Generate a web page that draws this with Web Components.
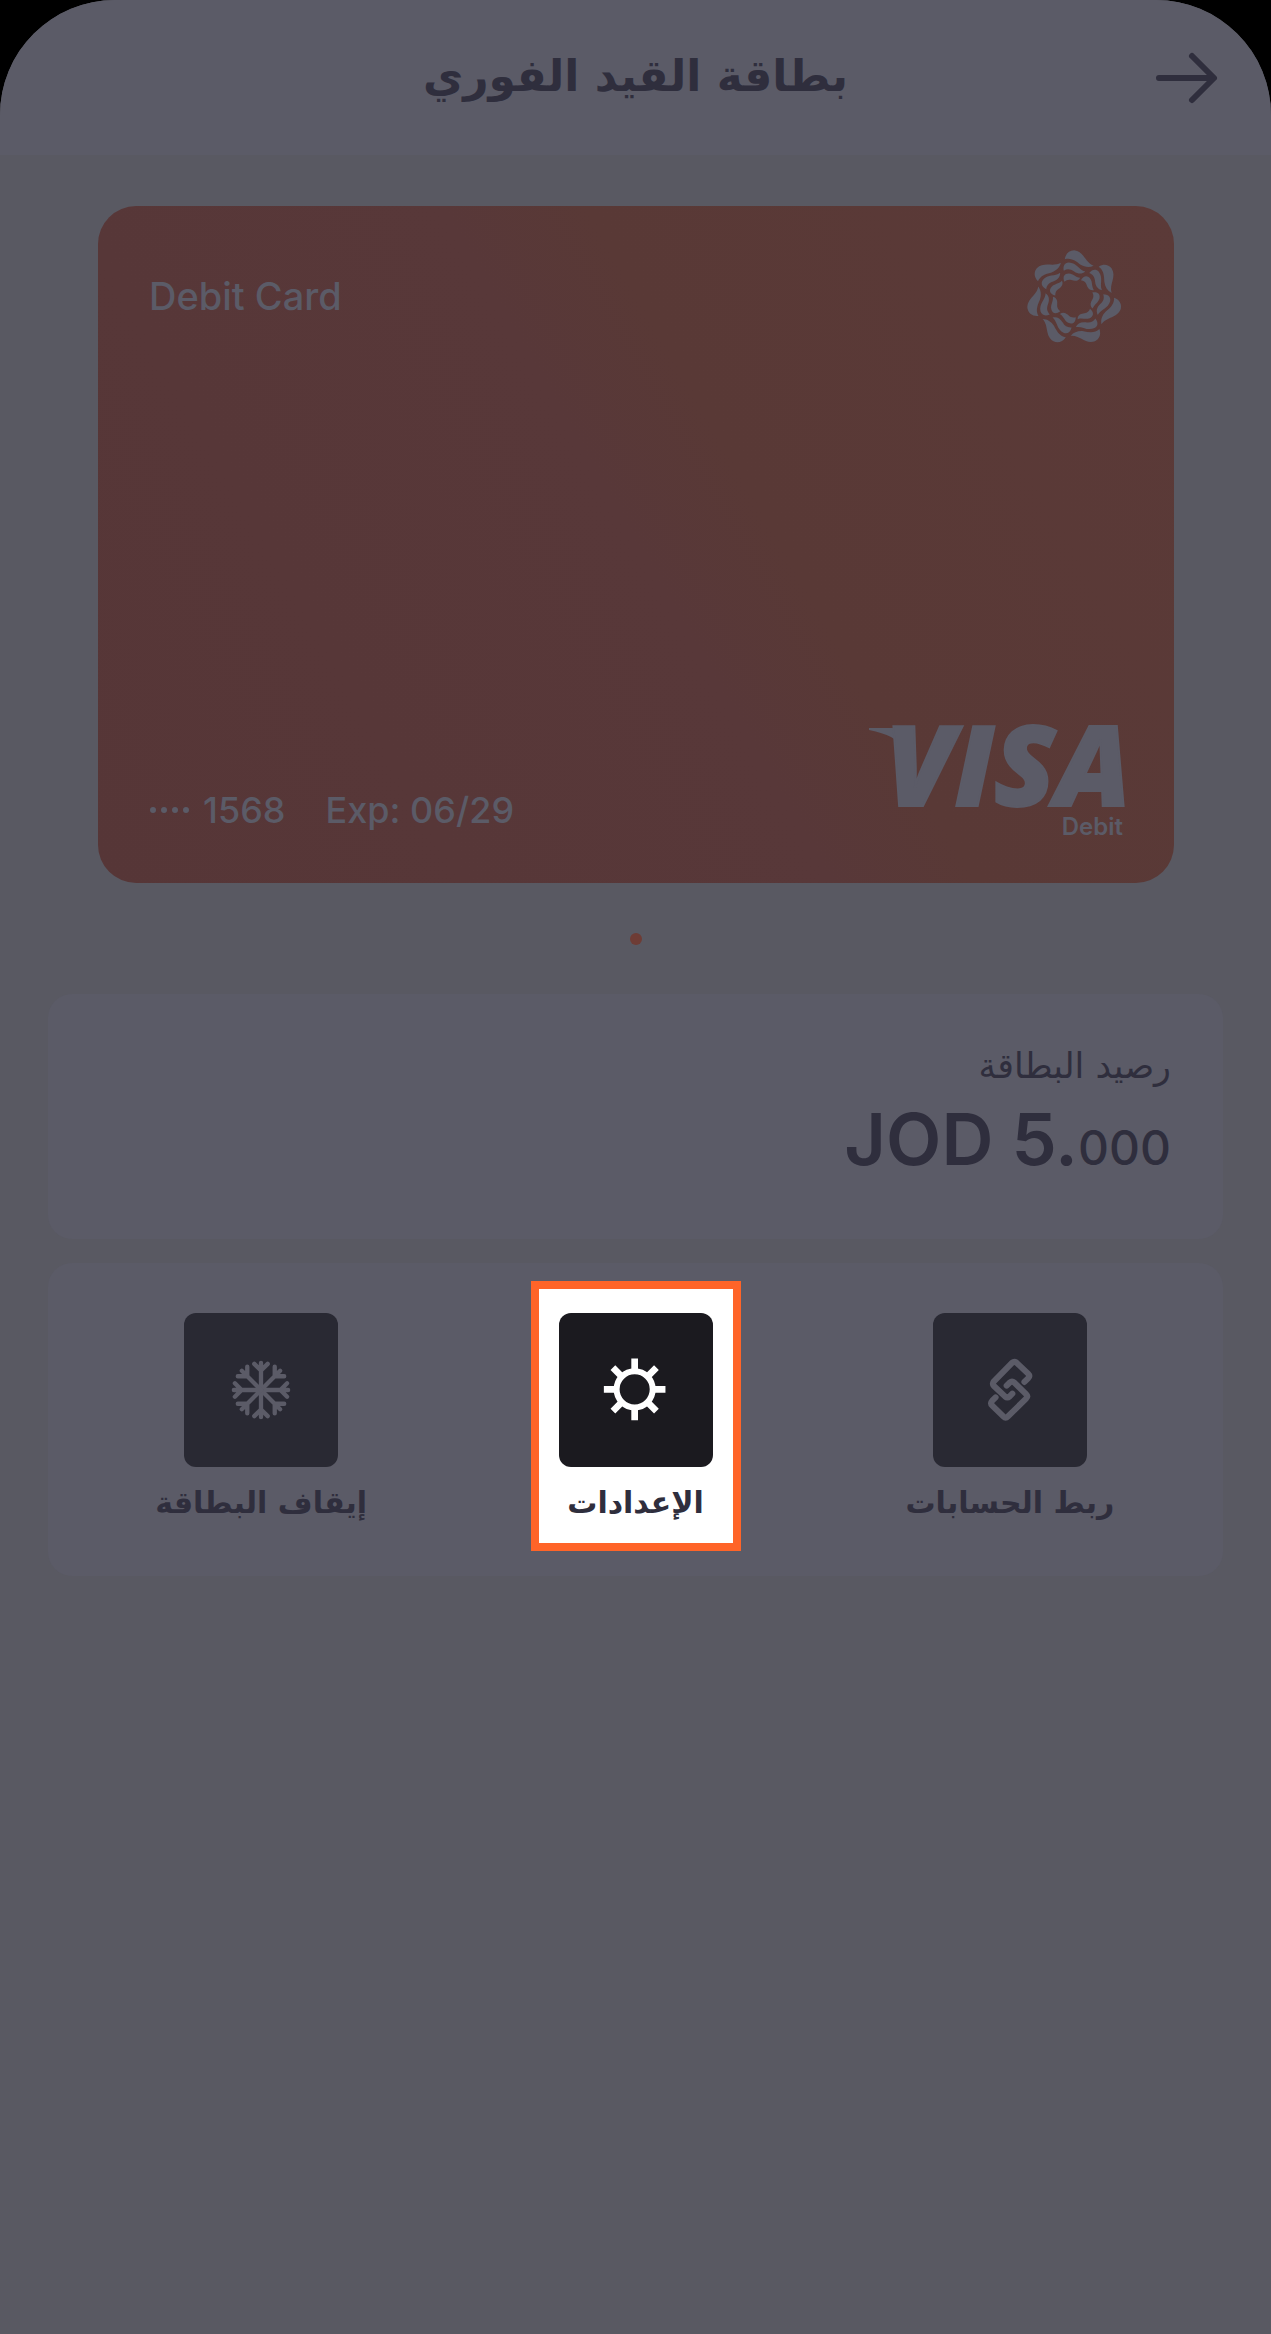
<!DOCTYPE html>
<html lang="ar" dir="rtl">
<head>
<meta charset="utf-8">
<meta name="viewport" content="width=device-width, initial-scale=1">
<title>بطاقة القيد الفوري</title>
<style>
    :root {
        --page: #595962;
        --panel: #5b5b67;
        --ink: #2f2e3d;
        --tile: #292933;
        --accent: #ff6428;
        --latin: Inter, "Liberation Sans", sans-serif;
    }
    body {
        margin: 0;
        background: #000;
        color: var(--ink);
        font-family: "DejaVu Sans", sans-serif;
    }
</style>
</head>
<body>
<app-screen>
    <top-bar slot="header">بطاقة القيد الفوري</top-bar>
    <bank-card name="Debit Card" digits="1568" expires="06/29" kind="Debit"></bank-card>
    <card-pager></card-pager>
    <balance-panel currency="JOD" whole="5" fraction="000">رصيد البطاقة</balance-panel>
    <action-panel>
        <card-action icon="link">ربط الحسابات</card-action>
        <card-action icon="settings" active>الإعدادات</card-action>
        <card-action icon="freeze">إيقاف البطاقة</card-action>
    </action-panel>
</app-screen>

<script>
class AppScreen extends HTMLElement {
    constructor() {
        super();
        const shadow = this.attachShadow({ mode: 'open' });
        shadow.innerHTML = `
        <style>
            :host {
                display: flex;
                flex-direction: column;
                min-height: 100vh;
                background: var(--page);
                border-radius: 115px 115px 0 0;
                overflow: hidden;
            }
            main {
                display: flex;
                flex-direction: column;
                padding: 51px 48px;
            }
        </style>
        <slot name="header"></slot>
        <main><slot></slot></main>
        `;
    }
}

class TopBar extends HTMLElement {
    constructor() {
        super();
        const shadow = this.attachShadow({ mode: 'open' });
        shadow.innerHTML = `
        <style>
            :host {
                display: block;
                background: var(--panel);
            }
            header {
                display: grid;
                grid-template-columns: 1fr auto 1fr;
                align-items: center;
                height: 155px;
                padding: 0 52px;
            }
            h1 {
                margin: 0;
                padding-bottom: 4px;
                font-size: 44px;
                line-height: 64px;
                font-weight: bold;
            }
            button {
                justify-self: start;
                padding: 0;
                border: 0;
                background: none;
                color: inherit;
            }
            svg { display: block; }
        </style>
        <header>
            <button type="button" aria-label="رجوع">
                <svg width="64" height="54" viewBox="0 0 64 54" fill="none" stroke="currentColor" stroke-width="6" stroke-linecap="round" stroke-linejoin="round">
                    <path d="M4 27H58M37 5L59 27L37 49"/>
                </svg>
            </button>
            <h1><slot></slot></h1>
        </header>
        `;
    }
}

class BankCard extends HTMLElement {
    connectedCallback() {
        const shadow = this.attachShadow({ mode: 'open' });
        // one arm of the emblem, turned seven times round the centre
        let petals = '';
        for (let i = 0; i < 7; i++) {
            petals += `<use href="#petal" transform="rotate(${i * 360 / 7} 224 232)"/>`;
        }
        shadow.innerHTML = `
        <style>
            :host {
                display: block;
                margin: 0 49px 0 50px;
                direction: ltr;
                color: var(--panel);
                font-family: var(--latin);
            }
            article {
                display: flex;
                flex-direction: column;
                justify-content: space-between;
                box-sizing: border-box;
                aspect-ratio: 1076 / 677;
                padding: 44px 51px 40px;
                border-radius: 38px;
                background: linear-gradient(60deg, #563637, #583839 50%, #593936 60%, #5b3a38);
            }
            .row {
                display: flex;
                justify-content: space-between;
            }
            .row:last-child { align-items: flex-end; }
            .name, .number {
                font-size: 36px;
                line-height: 48px;
                font-weight: 500;
            }
            .name {
                padding-top: 22px;
                font-size: 38px;
            }
            .number {
                display: flex;
                gap: 40px;
                padding-bottom: 9px;
            }
            .number span:first-child {
                display: flex;
                align-items: center;
                gap: 14px;
            }
            .brand {
                display: flex;
                flex-direction: column;
                align-items: flex-end;
            }
            .visa {
                display: flex;
                align-items: flex-start;
                margin-right: -8px;
                font: italic 800 112px/100px "Open Sans", sans-serif;
                -webkit-text-stroke: 2px currentColor;
            }
            .visa svg {
                margin: 15px -30px 0 0;
            }
            .kind {
                padding-bottom: 2px;
                font-size: 24px;
                line-height: 28px;
                font-weight: 600;
            }
        </style>
        <article>
            <div class="row">
                <span class="name">${this.getAttribute('name')}</span>
                <svg width="97" height="95" viewBox="80 88 290 284" fill="currentColor" aria-hidden="true">
                    <defs>
                        <g id="petal">
                            <path d="M196 116C198 99 209 89 224 89C254 92 256 125 282 135C269 141 255 139 242 131C226 119 213 111 196 116Z"/>
                            <path d="M193 150C190 136 195 126 208 125C232 126 238 147 257 152C248 160 236 160 224 152C212 144 203 144 193 150Z"/>
                            <path d="M195 183C188 167 195 158 208 158C222 159 227 169 242 171C236 183 224 181 216 178C207 175 201 178 195 183Z"/>
                        </g>
                    </defs>
                    ${petals}
                </svg>
            </div>
            <div class="row">
                <div class="number">
                    <span>
                        <svg width="40" height="8" viewBox="0 0 40 8" fill="currentColor" aria-hidden="true">
                            <circle cx="4" cy="4" r="3"/><circle cx="15" cy="4" r="3"/><circle cx="26" cy="4" r="3"/><circle cx="37" cy="4" r="3"/>
                        </svg>
                        ${this.getAttribute('digits')}
                    </span>
                    <span>Exp: ${this.getAttribute('expires')}</span>
                </div>
                <div class="brand">
                    <span class="visa">
                        <svg width="46" height="24" viewBox="0 0 46 24" fill="currentColor" aria-hidden="true">
                            <path d="M0 0H44V20L32 22Q30 13 22 9Q14 5 0 2Z"/>
                        </svg>
                        VISA
                    </span>
                    <span class="kind">${this.getAttribute('kind')}</span>
                </div>
            </div>
        </article>
        `;
    }
}

class CardPager extends HTMLElement {
    constructor() {
        super();
        const shadow = this.attachShadow({ mode: 'open' });
        shadow.innerHTML = `
        <style>
            :host {
                display: flex;
                justify-content: center;
                padding: 50px 0 49px;
            }
            i {
                width: 12px;
                height: 12px;
                border-radius: 50%;
                background: #6e3c35;
            }
        </style>
        <i></i>
        `;
    }
}

class BalancePanel extends HTMLElement {
    connectedCallback() {
        const shadow = this.attachShadow({ mode: 'open' });
        shadow.innerHTML = `
        <style>
            :host {
                display: block;
                padding: 48px 52px 56px;
                border-radius: 24px;
                background: var(--panel);
            }
            p { margin: 0; }
            .label {
                font-size: 35px;
                line-height: 48px;
            }
            .amount {
                direction: ltr;
                padding-top: 4px;
                text-align: right;
                font-family: var(--latin);
                font-size: 72px;
                line-height: 89px;
                font-weight: 600;
            }
            small {
                font-size: 48px;
                line-height: 48px;
                font-weight: 500;
            }
        </style>
        <p class="label"><slot></slot></p>
        <p class="amount">${this.getAttribute('currency')} ${this.getAttribute('whole')}.<small>${this.getAttribute('fraction')}</small></p>
        `;
    }
}

class ActionPanel extends HTMLElement {
    constructor() {
        super();
        const shadow = this.attachShadow({ mode: 'open' });
        shadow.innerHTML = `
        <style>
            :host {
                display: grid;
                grid-template-columns: repeat(3, 1fr);
                justify-items: center;
                margin-top: 24px;
                padding: 18px 26px 25px;
                border-radius: 24px;
                background: var(--panel);
            }
        </style>
        <slot></slot>
        `;
    }
}

const ICONS = {
    link: `<g fill="none" stroke="currentColor" stroke-width="18" stroke-linecap="round" stroke-linejoin="round">
            <path d="M273 206L284 195Q291 188 284 181L250 149Q243 143 236 149L182 204Q176 211 182 218L215 249Q222 255 229 249L237 241"/>
            <path d="M187 252L177 262Q170 270 177 277L210 309Q217 316 224 309L278 256Q285 249 278 242L243 208Q236 202 229 208L220 217"/>
        </g>`,
    settings: `<g fill="none" stroke="currentColor">
            <circle cx="226" cy="228" r="54" stroke-width="18"/>
            <path stroke-width="20" d="M226 168V136M226 288V320M166 228H134M286 228H318M184 186L161 163M268 186L291 163M184 270L161 293M268 270L291 293"/>
        </g>`,
    freeze: `<defs><path id="arm" d="M230 230V149M230 172L210 152M230 172L250 152"/></defs>
        <g fill="none" stroke="currentColor" stroke-width="13" stroke-linecap="round">
            ${[0, 45, 90, 135, 180, 225, 270, 315].map(a => `<use href="#arm" transform="rotate(${a} 230 230)"/>`).join('')}
        </g>`
};

class CardAction extends HTMLElement {
    connectedCallback() {
        const shadow = this.attachShadow({ mode: 'open' });
        shadow.innerHTML = `
        <style>
            :host { display: block; }
            button {
                display: flex;
                flex-direction: column;
                align-items: center;
                box-sizing: border-box;
                min-width: 210px;
                height: 270px;
                padding: 24px 0 0;
                border: 8px solid transparent;
                background: none;
                color: var(--ink);
                font-family: inherit;
                font-size: 30px;
                line-height: 48px;
                font-weight: bold;
                white-space: nowrap;
            }
            svg {
                width: 154px;
                height: 154px;
                margin-bottom: 12px;
                border-radius: 12px;
                background: var(--tile);
                color: var(--panel);
            }
            :host([active]) button {
                border-color: var(--accent);
                background: #fff;
            }
            :host([active]) svg {
                background: #1b1a1f;
                color: #fff;
            }
        </style>
        <button type="button">
            <svg viewBox="0 0 460 460" aria-hidden="true">${ICONS[this.getAttribute('icon')]}</svg>
            <span><slot></slot></span>
        </button>
        `;
    }
}

customElements.define('app-screen', AppScreen);
customElements.define('top-bar', TopBar);
customElements.define('bank-card', BankCard);
customElements.define('card-pager', CardPager);
customElements.define('balance-panel', BalancePanel);
customElements.define('action-panel', ActionPanel);
customElements.define('card-action', CardAction);
</script>
</body>
</html>
